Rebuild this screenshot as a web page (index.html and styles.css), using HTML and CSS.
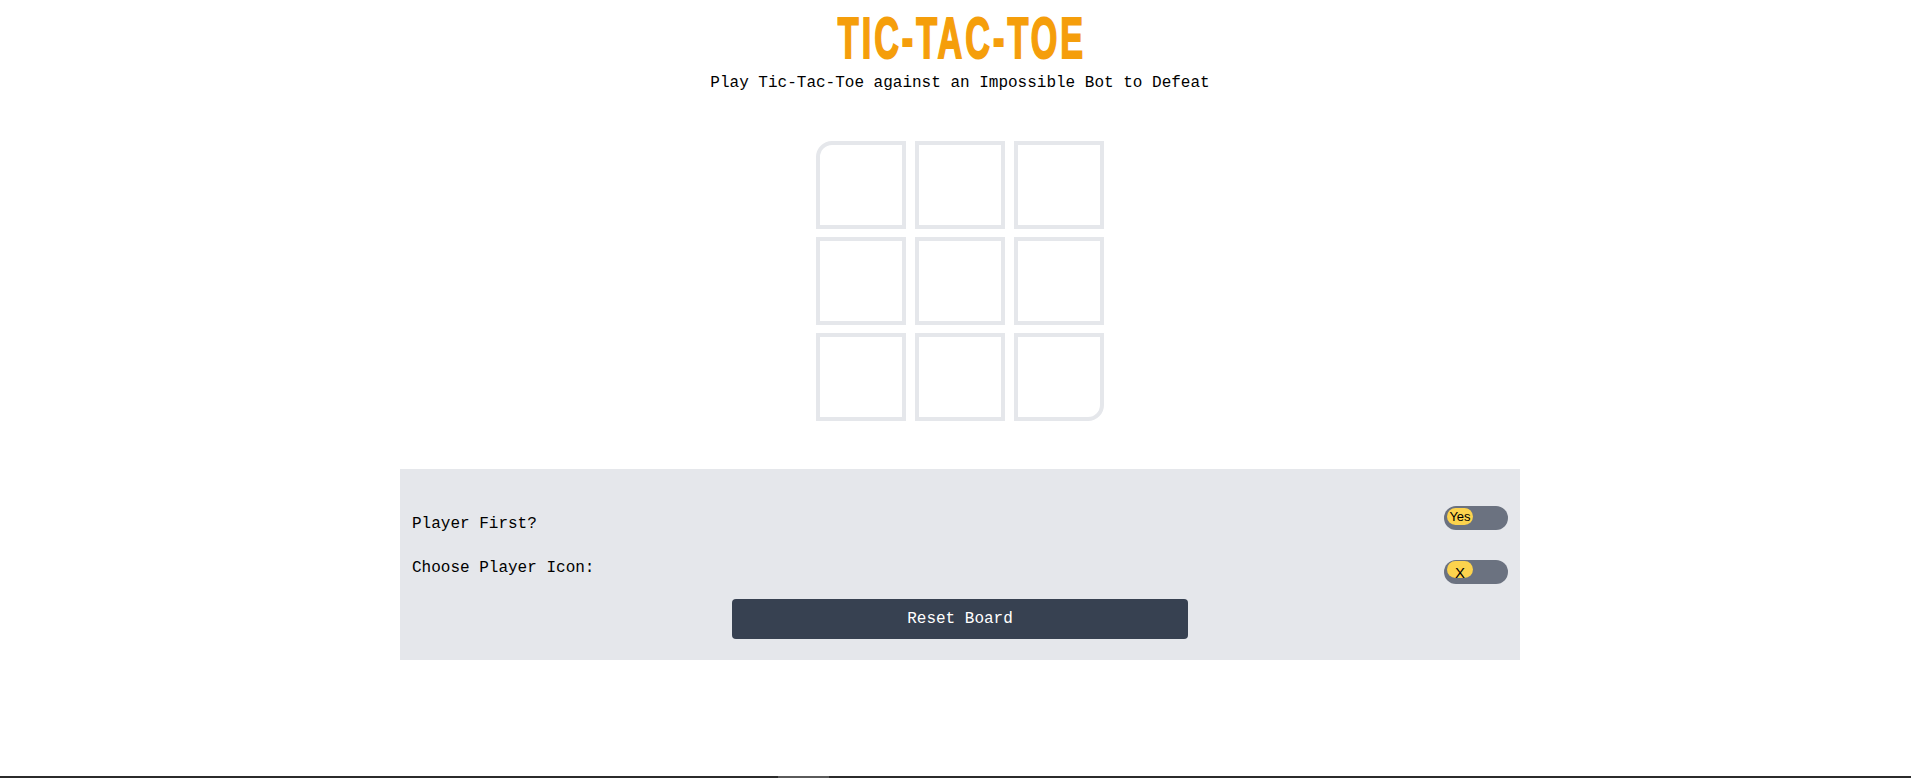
FILE: index.html
```html
<!DOCTYPE html>
<html lang="en">
<head>
<meta charset="utf-8">
<title>Tic-Tac-Toe</title>
<link rel="stylesheet" href="styles.css">
</head>
<body>
<div class="page">
  <main class="main">
    <header class="header">
      <h1 class="title"><span class="title-text">TIC-TAC-TOE</span></h1>
      <p class="subtitle">Play Tic-Tac-Toe against an Impossible Bot to Defeat</p>
    </header>
    <div class="board">
      <div class="cell cell-tl"></div>
      <div class="cell"></div>
      <div class="cell"></div>
      <div class="cell"></div>
      <div class="cell"></div>
      <div class="cell"></div>
      <div class="cell"></div>
      <div class="cell"></div>
      <div class="cell cell-br"></div>
    </div>
    <section class="panel">
      <div class="row row-first">
        <span class="label label-first">Player First?</span>
        <div class="toggle toggle-first"><span class="knob knob-yes">Yes</span></div>
      </div>
      <div class="row row-icon">
        <span class="label">Choose Player Icon:</span>
        <div class="toggle toggle-icon"><span class="knob knob-x">X</span></div>
      </div>
      <div class="actions">
        <button class="reset" type="button">Reset Board</button>
      </div>
    </section>
  </main>
  <footer class="footer"><span class="footer-thumb"></span></footer>
</div>
</body>
</html>
```

FILE: styles.css
```css
html, body {
  margin: 0;
  padding: 0;
  background: #ffffff;
  overflow: hidden;
}

.page {
  width: 1920px;
  height: 778px;
  display: flex;
  flex-direction: column;
  font-family: "Liberation Mono", "DejaVu Sans Mono", monospace;
  font-size: 16px;
  line-height: 24px;
  color: #000;
}

.main {
  flex: 1;
  display: flex;
  flex-direction: column;
  align-items: center;
}

.header {
  display: flex;
  flex-direction: column;
  align-items: center;
  padding-top: 10px;
}

.title {
  margin: 0;
  height: 57px;
  font-family: "Liberation Sans Narrow", "Liberation Sans", "DejaVu Sans Condensed", sans-serif;
  font-weight: 700;
  font-size: 57px;
  line-height: 57px;
  color: #f59e0b;
}

.title-text {
  display: inline-block;
  letter-spacing: 5px;
  padding-left: 5px;
  transform: scaleX(0.6);
  transform-origin: center;
  -webkit-text-stroke: 2px #f59e0b;
}

.subtitle {
  margin: 4px 0 0;
  line-height: 24px;
}

.board {
  margin-top: 46px;
  display: grid;
  grid-template-columns: repeat(3, 90px);
  grid-auto-rows: 88px;
  column-gap: 9px;
  row-gap: 8px;
}

.cell {
  box-sizing: border-box;
  border: 4px solid #e5e7eb;
  background: #fff;
}

.cell-tl {
  border-top-left-radius: 16px;
}

.cell-br {
  border-bottom-right-radius: 16px;
}

.panel {
  box-sizing: border-box;
  margin-top: 48px;
  width: 1120px;
  background: #e5e7eb;
  padding: 37px 12px 21px 12px;
  display: flex;
  flex-direction: column;
}

.row {
  display: flex;
  justify-content: space-between;
  align-items: flex-start;
}

.row-icon {
  margin-top: 20px;
}

.label-first {
  margin-top: 6px;
}

.toggle {
  box-sizing: border-box;
  width: 64px;
  height: 24px;
  border-radius: 12px;
  background: #6b7280;
  padding: 2px 3px;
  display: flex;
  align-items: flex-start;
}

.toggle-icon {
  margin-top: 4px;
  padding-top: 1px;
}

.knob {
  width: 26px;
  height: 17px;
  border-radius: 9px;
  background: #fcd34d;
  font-family: "Liberation Sans", Arial, sans-serif;
  color: #000;
  white-space: nowrap;
  display: flex;
  justify-content: center;
}

.knob-yes {
  font-size: 13px;
  line-height: 18px;
}

.knob-x {
  font-size: 15px;
  line-height: 23px;
  height: 17px;
  overflow: visible;
}

.actions {
  margin-top: 15px;
  display: flex;
  justify-content: center;
}

.reset {
  width: 456px;
  height: 40px;
  border: none;
  border-radius: 4px;
  background: #374151;
  color: #ffffff;
  font-family: "Liberation Mono", "DejaVu Sans Mono", monospace;
  font-size: 16px;
  cursor: pointer;
}

.footer {
  height: 2px;
  background: #2b2b2b;
  display: flex;
}

.footer-thumb {
  margin-left: 778px;
  width: 51px;
  background: #5a5a5a;
}
```
